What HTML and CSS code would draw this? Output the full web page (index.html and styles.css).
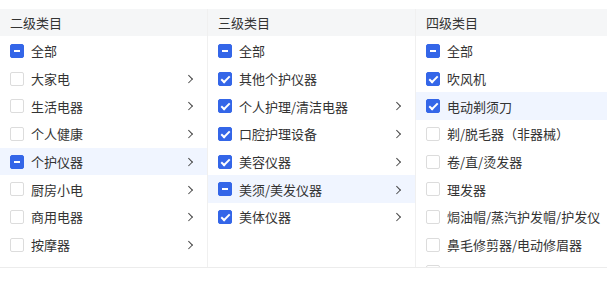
FILE: index.html
```html
<!DOCTYPE html>
<html>
<head>
    <meta charset="utf-8" />
    <title>类目选择</title>
    <link rel="stylesheet" href="styles.css">
</head>
<body>

<div class="cat-panel">

    <!-- 二级类目 -->
    <div class="cat-col">
        <div class="cat-head">二级类目</div>
        <div class="cat-list">
            <div class="cat-row"><span class="cb cb-half"></span><span class="cat-name">全部</span></div>
            <div class="cat-row"><span class="cb"></span><span class="cat-name">大家电</span><i class="arrow"></i></div>
            <div class="cat-row"><span class="cb"></span><span class="cat-name">生活电器</span><i class="arrow"></i></div>
            <div class="cat-row"><span class="cb"></span><span class="cat-name">个人健康</span><i class="arrow"></i></div>
            <div class="cat-row cat-row-on"><span class="cb cb-half"></span><span class="cat-name">个护仪器</span><i class="arrow"></i></div>
            <div class="cat-row"><span class="cb"></span><span class="cat-name">厨房小电</span><i class="arrow"></i></div>
            <div class="cat-row"><span class="cb"></span><span class="cat-name">商用电器</span><i class="arrow"></i></div>
            <div class="cat-row"><span class="cb"></span><span class="cat-name">按摩器</span><i class="arrow"></i></div>
        </div>
    </div>

    <!-- 三级类目 -->
    <div class="cat-col">
        <div class="cat-head">三级类目</div>
        <div class="cat-list">
            <div class="cat-row"><span class="cb cb-half"></span><span class="cat-name">全部</span></div>
            <div class="cat-row"><span class="cb cb-on"></span><span class="cat-name">其他个护仪器</span></div>
            <div class="cat-row"><span class="cb cb-on"></span><span class="cat-name">个人护理/清洁电器</span><i class="arrow"></i></div>
            <div class="cat-row"><span class="cb cb-on"></span><span class="cat-name">口腔护理设备</span><i class="arrow"></i></div>
            <div class="cat-row"><span class="cb cb-on"></span><span class="cat-name">美容仪器</span><i class="arrow"></i></div>
            <div class="cat-row cat-row-on"><span class="cb cb-half"></span><span class="cat-name">美须/美发仪器</span><i class="arrow"></i></div>
            <div class="cat-row"><span class="cb cb-on"></span><span class="cat-name">美体仪器</span><i class="arrow"></i></div>
        </div>
    </div>

    <!-- 四级类目 -->
    <div class="cat-col">
        <div class="cat-head">四级类目</div>
        <div class="cat-list">
            <div class="cat-row"><span class="cb cb-half"></span><span class="cat-name">全部</span></div>
            <div class="cat-row"><span class="cb cb-on"></span><span class="cat-name">吹风机</span></div>
            <div class="cat-row cat-row-on"><span class="cb cb-on"></span><span class="cat-name">电动剃须刀</span></div>
            <div class="cat-row"><span class="cb"></span><span class="cat-name">剃/脱毛器（非器械）</span></div>
            <div class="cat-row"><span class="cb"></span><span class="cat-name">卷/直/烫发器</span></div>
            <div class="cat-row"><span class="cb"></span><span class="cat-name">理发器</span></div>
            <div class="cat-row"><span class="cb"></span><span class="cat-name">焗油帽/蒸汽护发帽/护发仪</span></div>
            <div class="cat-row"><span class="cb"></span><span class="cat-name">鼻毛修剪器/电动修眉器</span></div>
            <div class="cat-row"><span class="cb"></span></div>
        </div>
    </div>

</div>

</body>
</html>
```

FILE: styles.css
```css
body{
    margin: 0px;padding: 0px;background: #fff;
    font-family: "Noto Sans CJK SC", "Noto Sans", sans-serif;
    font-size: 13px;color: #333;
}

/*类目面板*/
.cat-panel{
    margin-top: 9px;
    display: grid;
    grid-template-columns: 207px 208px 1fr;
    height: 258px;
    border-bottom: 1px solid #ececec;
    overflow: hidden;
}

.cat-col{
    display: flex;flex-direction: column;
    min-width: 0;overflow: hidden;
}
.cat-col + .cat-col{border-left: 1px solid #f0f0f0;}

/*标题栏*/
.cat-head{
    height: 27px;line-height: 27px;flex: none;
    padding: 0px 10px;
    background: #f5f6f7;color: #333;
}

.cat-list{flex: 1;overflow: hidden;padding-top: 1px;}

/*每行*/
.cat-row{
    height: 27.7px;
    display: flex;align-items: center;gap: 7px;
    padding: 0px 14px 0px 10px;
    white-space: nowrap;
}
.cat-row-on{background: #f0f5ff;}

.cat-name{flex: 1;line-height: 1;}

/*复选框*/
.cb{
    width: 14px;height: 14px;flex: none;box-sizing: border-box;
    border: 1px solid #dcdcdc;border-radius: 2px;background: #fff;
    position: relative;
}
.cb-on,.cb-half{background: #3466e8;border-color: #3466e8;}
.cb-half::after{
    content: "";position: absolute;
    left: 3px;right: 3px;top: 5px;height: 2px;
    background: #fff;
}
.cb-on::after{
    content: "";position: absolute;
    left: 4px;top: 1px;width: 3px;height: 7px;
    border: solid #fff;border-width: 0 2px 2px 0;
    transform: rotate(45deg);
}

/*右箭头*/
.arrow{
    width: 4.5px;height: 4.5px;flex: none;
    border: solid #444;border-width: 1.6px 1.6px 0 0;
    transform: rotate(45deg);
    margin-right: 2px;
}
```
